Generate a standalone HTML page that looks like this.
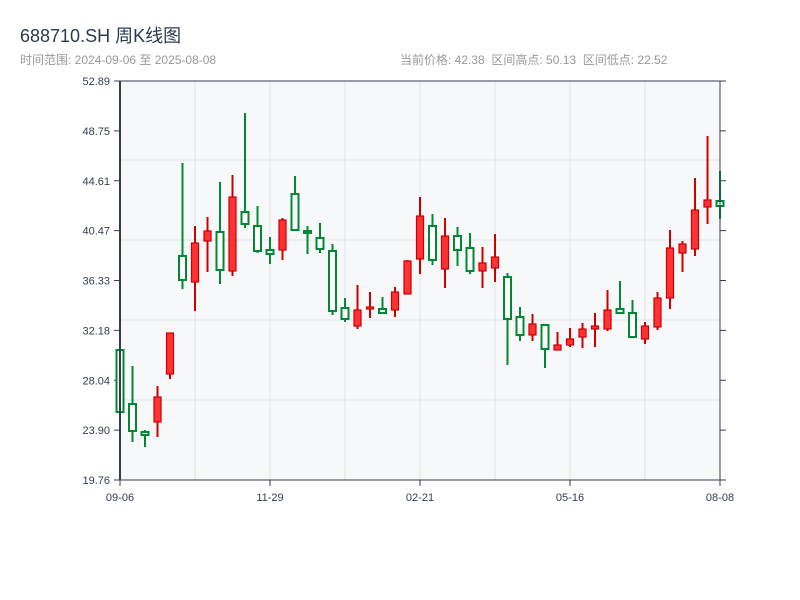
<!DOCTYPE html>
<html><head><meta charset="utf-8"><style>
body{margin:0;width:800px;height:600px;background:#fff;font-family:"Liberation Sans","Noto Sans CJK SC",sans-serif;position:relative;overflow:hidden}
.t{position:absolute;left:20px;top:22px;font-size:18px;color:#2e3a4b;white-space:nowrap}
.s{position:absolute;top:51px;font-size:12px;color:#999;white-space:nowrap}
</style></head><body>
<div class="t">688710.SH 周K线图</div>
<div class="s" style="left:20px">时间范围: 2024-09-06 至 2025-08-08</div>
<div class="s" style="left:400px">当前价格: 42.38&nbsp; 区间高点: 50.13&nbsp; 区间低点: 22.52</div>
<svg id="c" width="800" height="600" style="position:absolute;left:0;top:0" font-family="Liberation Sans, sans-serif" font-size="11" fill="#333d4f"></svg>
<script>
var d=[[350,412,350,412,0],[404,431,366,442,0],[432,435,430,447,0],[397,422,386,437,1],[333,374,333,379,1],[256,280,163,289,0],[243,282,226,311,1],[231,241,217,272,1],[232,270,182,284,0],[197,271,175,276,1],[212,224,113,228,0],[226,251,206,253,0],[250,254,237,264,0],[220,250,218,260,1],[194,230,176,230,0],[231,233,226,254,0],[238,249,223,253,0],[251,311,244,315,0],[308,319,298,322,0],[310,326,285,329,1],[307,309,292,318,1],[309,313,297,313,0],[292,310,287,317,1],[261,294,260,294,1],[216,259,197,274,1],[226,260,214,265,0],[236,269,218,288,1],[236,250,227,266,0],[248,271,233,274,0],[263,271,247,288,1],[257,268,234,282,1],[277,319,273,365,0],[317,335,307,341,0],[324,335,314,341,1],[325,349,325,368,0],[345,350,332,350,1],[339,345,328,347,1],[329,337,323,348,1],[326,329,313,347,1],[310,329,290,331,1],[309,313,281,313,0],[313,337,300,337,0],[326,339,322,344,1],[298,327,292,330,1],[248,298,230,309,1],[244,253,241,272,1],[210,249,178,256,1],[200,207,136,224,1],[201,206,171,219,0]];
var s='<rect x="120" y="81" width="600" height="399" fill="#f7f8fa"/>';
for(var x=195;x<720;x+=75)s+='<line x1="'+x+'" y1="81" x2="'+x+'" y2="480" stroke="#e0e3e8"/>';
for(var y=160;y<480;y+=80)s+='<line x1="120" y1="'+y+'" x2="720" y2="'+y+'" stroke="#e0e3e8"/>';
var labs=['52.89','48.75','44.61','40.47','36.33','32.18','28.04','23.90','19.76'];
for(var i=0;i<9;i++){var yy=81+i*49.875;s+='<line x1="114" y1="'+yy+'" x2="120" y2="'+yy+'" stroke="#333d4f"/><line x1="720" y1="'+yy+'" x2="726" y2="'+yy+'" stroke="#333d4f"/><text x="110" y="'+(yy+4)+'" text-anchor="end">'+labs[i]+'</text>';}
var xl=['09-06','11-29','02-21','05-16','08-08'];
for(var i=0;i<5;i++){var xx=120+i*150;s+='<line x1="'+xx+'" y1="480" x2="'+xx+'" y2="486" stroke="#333d4f"/><text x="'+xx+'" y="501" text-anchor="middle">'+xl[i]+'</text>';}
d.forEach(function(c,i){var x=120+12.5*i;var up=c[4];var col=up?'#cc0000':'#008833';
s+='<line x1="'+x+'" y1="'+c[2]+'" x2="'+x+'" y2="'+c[3]+'" stroke="'+col+'" stroke-width="2"/>';
var h=Math.max(c[1]-c[0],2);
s+='<rect x="'+(x-3.5)+'" y="'+c[0]+'" width="7" height="'+h+'" fill="'+(up?'#ff3333':'#ffffff')+'" stroke="'+col+'" stroke-width="'+(up?1.2:2)+'"/>';});
s+='<line x1="120" y1="81" x2="720" y2="81" stroke="#333d4f"/><line x1="120" y1="480" x2="720" y2="480" stroke="#333d4f"/><line x1="120" y1="81" x2="120" y2="480" stroke="#333d4f" stroke-width="2"/><line x1="720" y1="81" x2="720" y2="480" stroke="#333d4f"/>';
document.getElementById('c').innerHTML=s;
</script>
</body></html>
